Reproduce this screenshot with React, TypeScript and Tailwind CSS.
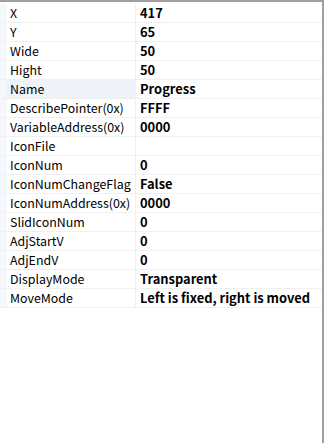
import * as React from "react"

const rows: [string, string][] = [
  ["X", "417"],
  ["Y", "65"],
  ["Wide", "50"],
  ["Hight", "50"],
  ["Name", "Progress"],
  ["DescribePointer(0x)", "FFFF"],
  ["VariableAddress(0x)", "0000"],
  ["IconFile", ""],
  ["IconNum", "0"],
  ["IconNumChangeFlag", "False"],
  ["IconNumAddress(0x)", "0000"],
  ["SlidIconNum", "0"],
  ["AdjStartV", "0"],
  ["AdjEndV", "0"],
  ["DisplayMode", "Transparent"],
  ["MoveMode", "Left is fixed, right is moved"],
]

function PropRow({ name, value }: { name: string; value: string }) {
  const selected = name === "Name"
  return (
    <div className="flex h-[19px] border-b border-[#f0f0f0]">
      <div className="w-[7px] bg-[#f4f7fc]" />
      <div
        className={
          selected
            ? "w-[129px] pl-[3px] flex items-center bg-[#eef3fa] border-r border-[#f0f0f0] text-black text-[12.4px] whitespace-nowrap overflow-hidden"
            : "w-[129px] pl-[3px] flex items-center border-r border-[#f0f0f0] text-black text-[12.4px] whitespace-nowrap overflow-hidden"
        }
      >
        {name}
      </div>
      <div className="flex-1 pl-[4px] flex items-center font-bold text-black text-[12.9px] whitespace-nowrap">{value}</div>
    </div>
  )
}

export default function App() {
  return (
    <div
      className="w-[329px] h-[443px] bg-white overflow-hidden leading-none"
      style={{ fontFamily: '"Microsoft YaHei", "Noto Sans CJK SC", sans-serif' }}
    >
      <div className="w-[324px] h-[443px] border-t-2 border-r-2 border-[#a0a0a0] pt-[2px] flex flex-col">
        {rows.map(([n, v]) => (
          <PropRow key={n} name={n} value={v} />
        ))}
      </div>
    </div>
  )
}
